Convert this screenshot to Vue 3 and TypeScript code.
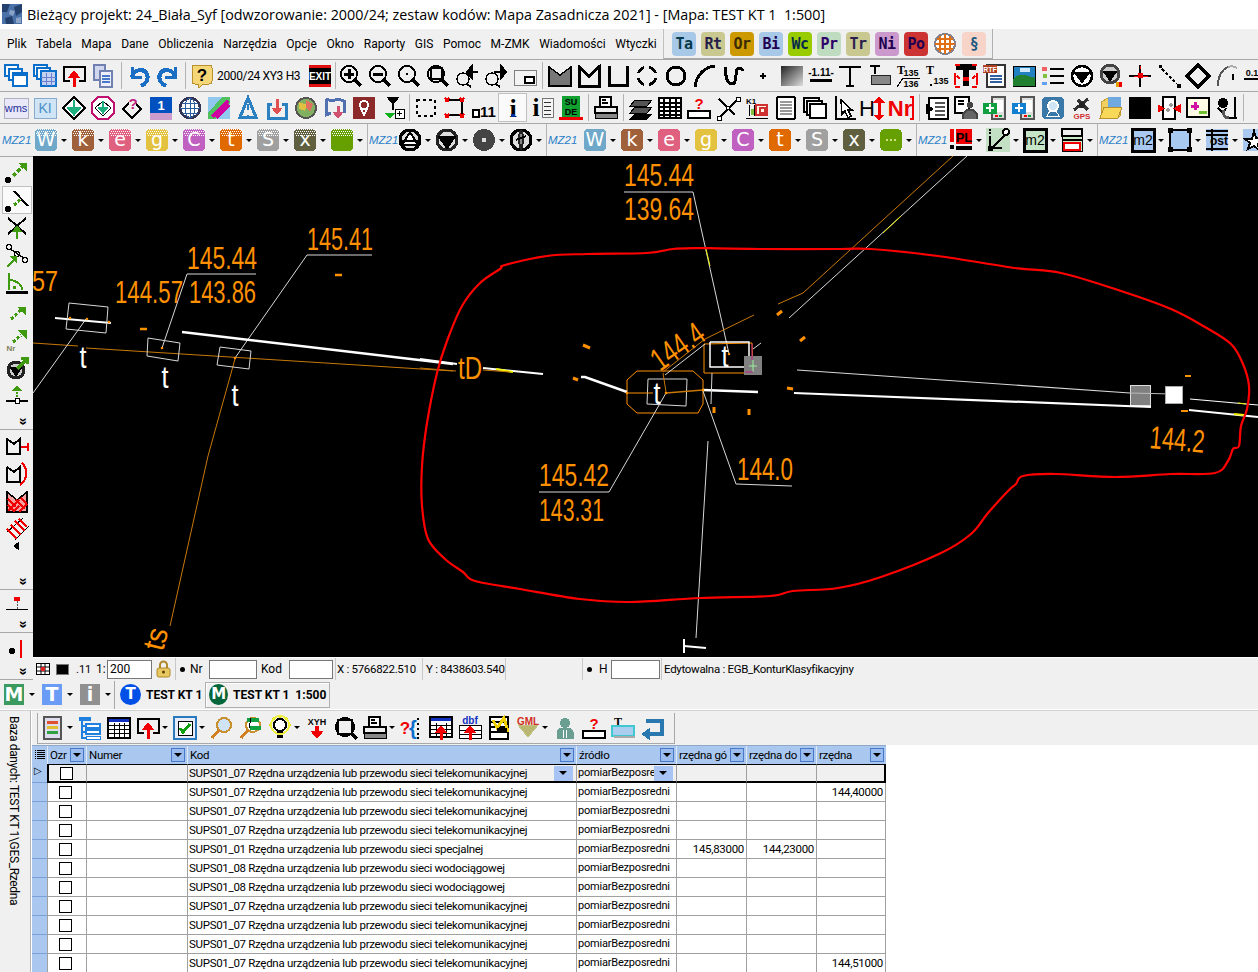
<script setup lang="ts">
type Pt = [number, number]

const P = (d: string, s = '#000', w = 2, f = 'none') =>
  `<path d="${d}" stroke="${s}" stroke-width="${w}" fill="${f}"/>`
const PD = (d: string, s: string, w: number, dash: string) =>
  `<path d="${d}" stroke="${s}" stroke-width="${w}" fill="none" stroke-dasharray="${dash}"/>`
const R = (x: number, y: number, w: number, h: number, f = 'none', s = 'none', sw = 1, r = 0) =>
  `<rect x="${x}" y="${y}" width="${w}" height="${h}" fill="${f}" stroke="${s}" stroke-width="${sw}" rx="${r}"/>`
const C = (x: number, y: number, r: number, f = 'none', s = 'none', sw = 2) =>
  `<circle cx="${x}" cy="${y}" r="${r}" fill="${f}" stroke="${s}" stroke-width="${sw}"/>`
const T = (t: string, x: number, y: number, size: number, f = '#000', weight = 'normal', fam = 'Liberation Sans') =>
  `<text x="${x}" y="${y}" font-size="${size}" fill="${f}" font-weight="${weight}" font-family="${fam}, sans-serif" text-anchor="middle">${t}</text>`

const BL = '#0a6ecb'
const GR = '#3f9a10'
const RD = '#f00000'
const lens = (x = 10, y = 10, r = 8) => C(x, y, r, 'none', '#000', 2) + P(`M${x + 6} ${y + 6}L${x + 12} ${y + 12}`, '#000', 3)
const upRed = (x: number, y0: number, y1: number) => P(`M${x} ${y1}V${y0 + 5}`, RD, 3) + P(`M${x - 5} ${y0 + 6}L${x} ${y0}L${x + 5} ${y0 + 6}Z`, RD, 1, RD)
const dither = [...Array(11).keys()].map((i) => R(2 + i * 2, 1, 1, 1, '#fff') + R(3 + i * 2, 3, 1, 1, '#fff') + R(2 + i * 2, 5, 1, 1, '#fff') + R(3 + i * 2, 7, 1, 1, '#fff')).join('')
const dithered = (col: string, ch: string) =>
  R(1, 1, 22, 22, col, 'none', 1, 4) + dither + T(ch, 12, 18, 19, '#fff', 'normal', 'DejaVu Sans')
const tile = (col: string, ch: string) => R(1, 1, 22, 22, col, 'none', 1, 4) + T(ch, 12, 18, 19, '#fff', 'normal', 'DejaVu Sans')
const triCircle = (inner: string, ring = '#000') => C(12, 12, 10, '#ddd', ring, 3) + inner

const icons: Record<string, string> = {
  winStack: R(1, 1, 13, 11, '#fff', BL, 2) + R(5, 5, 13, 11, '#fff', BL, 2) + R(9, 9, 14, 13, '#fff', BL, 2) + R(9, 9, 14, 3, BL),
  winTable: R(1, 1, 13, 11, '#fff', BL, 2) + R(4, 4, 13, 11, '#fff', BL, 2) + R(8, 7, 15, 15, '#c4d0f0', BL, 2) + P('M8 13h15M8 17h15M13 9v13M18 9v13', '#6a80d0', 1),
  imp: P('M8 17H2V3h21v14h-6', '#000', 2) + upRed(12, 7, 23),
  copy: R(3, 1, 11, 15, '#cfd6ee', '#7080b0', 1.5) + R(9, 7, 12, 16, '#eef', '#7080b0', 1.5) + P('M11 12h8M11 15h8M11 18h8', '#4878c8', 1.5),
  undo: P('M5 3v10h10', '#1a6fc4', 3) + P('M5 13C7 5 17 4 20 10c2 5-1 10-6 12', '#1a6fc4', 4),
  redo: P('M19 3v10H9', '#1a6fc4', 3) + P('M19 13C17 5 7 4 4 10c-2 5 1 10 6 12', '#1a6fc4', 4),
  help: R(2, 1, 20, 19, '#f6d778', '#b89030', 1, 3) + P('M8 20l1 4 4-4', '#b89030', 1, '#f6d778') + T('?', 12, 17, 17, '#000', 'bold'),
  exit: R(1, 1, 22, 22, '#000') + R(1, 1, 22, 3, '#e01010') + R(1, 20, 22, 3, '#e01010') + T('EXIT', 12, 16, 10, '#fff', 'bold'),
  zoomIn: lens() + P('M5 10h10M10 5v10', '#000', 3),
  zoomOut: lens() + P('M5 10h10', '#000', 3),
  zoomDot: lens() + R(9, 9, 2, 2, '#000'),
  zoomBox: C(10, 10, 8, 'none', '#000', 2) + R(5, 4, 11, 11, 'none', '#000', 1.5) + P('M16 16l6 6', '#000', 3),
  zoomPrev: C(8, 15, 6, 'none', '#000', 1.5) + P('M12 20l4 3', '#000', 2) + P('M12 8h11M12 8l5-6v12z', '#000', 2, '#000'),
  zoomNext: C(8, 15, 6, 'none', '#000', 1.5) + P('M12 20l4 3', '#000', 2) + P('M10 8h10M22 8l-5-6v12z', '#000', 2, '#000'),
  winSmall: R(1, 6, 22, 15, '#f4f4f4', '#808080', 1) + R(12, 13, 9, 6, '#fff', '#000', 1.5),
  mGray: P('M1 22V3l11 8 11-8v19z', '#000', 1.5, '#777'),
  mOut: P('M2 22V3l10 9 10-9v19z', '#000', 3),
  uOpen: P('M3 2v19h18V2', '#000', 3),
  circDash: C(12, 12, 9, 'none', '#000', 3) + R(0, 9, 24, 5, '#f0f0f0') + R(9, 0, 5, 24, '#f0f0f0'),
  circ: C(12, 12, 9, 'none', '#000', 3) + R(8, 11, 7, 2, '#f0f0f0'),
  arc: P('M2 23C3 12 11 3 22 2', '#000', 3),
  sCurve: P('M3 3c0 10 3 17 7 17 6 0 2-16 7-16 2 0 3 1 4 3', '#000', 3),
  dot: P('M9 12h6M12 9v6', '#000', 2),
  grad: `<defs><linearGradient id="gd" x1="0" y1="0" x2="1" y2="1"><stop offset="0" stop-color="#222"/><stop offset="1" stop-color="#ddd"/></linearGradient></defs>` + R(1, 2, 22, 20, 'url(#gd)'),
  num111: T('-1.11-', 12, 12, 10, '#000', 'bold') + R(1, 15, 22, 3, '#000'),
  tBig: P('M1 3h22M12 3v20M8 22h8', '#000', 2.5),
  tBox: P('M3 2h10M8 2v8', '#000', 2.5) + R(4, 11, 19, 9, '#888', '#222', 1),
  t135: T('T', 5, 10, 12, '#000', 'bold', 'Liberation Serif') + T('135', 15, 12, 9, '#000', 'bold') + P('M1 23l6-9h17', '#000', 1) + T('136', 15, 23, 9, '#000', 'bold'),
  t135b: T('T', 5, 10, 12, '#000', 'bold', 'Liberation Serif') + T('135', 16, 20, 9, '#000', 'bold') + R(5, 20, 2, 2, '#000'),
  tRed: P('M2 3h20M12 3v19', '#000', 6) + P('M1 9v12M23 9v12M3 12l3 3M21 12l-3 3', RD, 2) + R(9, 13, 6, 4, RD) + P('M1 1h5M18 1h5M1 23h5M18 23h5', RD, 1.5),
  rtf: R(4, 1, 18, 22, '#fff', '#333', 1.5) + R(0, 1, 14, 8, '#b04020') + T('RTF', 7, 8, 7, '#fff', 'bold') + P('M7 12h12M7 15h12M7 18h12', '#3060a0', 1.5),
  picture: R(1, 2, 22, 20, '#2080c0', '#000', 1) + P('M1 16c6-8 10-6 22-2v8H1z', '#000', 0, '#208030') + R(8, 4, 10, 4, '#cfe8ff'),
  list: R(1, 3, 5, 4, '#f06060') + R(2, 10, 4, 4, '#80c040') + R(1, 18, 5, 3, '#60a0f0') + P('M9 5h14M9 12h14M9 19h14', '#000', 2.5),
  tri: C(12, 12, 10, '#fff', '#000', 2.5) + P('M4 8h16L12 19z', '#000', 1, '#000'),
  triRed: C(11, 10, 9, '#ccc', '#444', 3) + P('M4 7h14l-7 10z', '#000', 1, '#000') + R(17, 18, 3, 5, '#e0a000') + R(20, 18, 3, 5, RD),
  crossNode: P('M12 1v22M1 12h22', '#000', 2) + R(10, 9, 5, 5, RD) + P('M12 2v3M6 12h4M15 12h5', RD, 1),
  dotDiag: R(2, 1, 3, 3, '#000') + R(20, 20, 4, 4, '#000') + PD('M5 5l15 15', '#000', 1.5, '3 2'),
  diamond: P('M12 1L23 12 12 23 1 12z', '#000', 4),
  arcDash: P('M3 22c0-8 3-16 10-19', '#555', 2) + P('M13 3c3-1 6-1 9 1', '#aaa', 2) + P('M18 10v6', '#000', 2),
  num01: T('0.1', 8, 12, 9, '#000', 'bold') + R(0, 14, 24, 2, '#000'),
  wms: R(0, 2, 24, 20, '#e8e8f8', '#b0b0c0', 1) + T('wms', 12, 16, 11, '#1f2f9f'),
  ki: R(1, 2, 22, 20, '#cfe4f4', '#88aacc', 1) + T('KI', 12, 17, 14, '#4a90c8'),
  diaGreen: P('M12 1L23 12 12 23 1 12z', '#000', 1.5, '#fff') + P('M12 4v8M6 12l6 7 6-7z', '#20b080', 1.5, '#20b080'),
  octGreen: P('M7 1h10l6 6v10l-6 6H7l-6-6V7z', '#c01070', 1.5, '#fff') + P('M12 5L20 12 12 20 4 12z', '#000', 1) + P('M12 5v7M8 12l4 5 4-5z', '#20b080', 1.5, '#20b080'),
  diaQ: P('M12 4L21 13 12 22 3 13z', '#000', 1.5, 'none') + R(9, 0, 7, 12, '#f0f0f0') + T('?', 13, 13, 15, '#c02080', 'bold'),
  oneBlue: R(1, 1, 22, 16, '#0050c0') + R(1, 17, 22, 7, '#cc9ccc') + T('1', 12, 14, 13, '#fff', 'bold'),
  globe: C(12, 12, 10, '#fff', '#335', 2.5) + P('M2 12h20M12 2v20M4 7h16M4 17h16', '#2a60a0', 1) + `<ellipse cx="12" cy="12" rx="5" ry="10" fill="none" stroke="#2a60a0"/>`,
  pattern: R(1, 1, 22, 22, '#90c8f0') + P('M1 17L15 1h8v6L9 23H1z', '#000', 0, '#50c060') + P('M5 21L21 5M9 22l13-13', '#d000a0', 3, 'none'),
  blueTri: P('M12 2l8 19H4z', '#2a80c0', 3) + P('M12 8v6', '#2a80c0', 2) + C(12, 20, 1, '#2a80c0'),
  trayRed: P('M7 8H3v14h18V8h-4', '#2a80c0', 3) + P('M12 3v11', '#e05050', 3) + P('M7 12l5 6 5-6z', '#e05050', 1, '#e05050'),
  mapGlobe: C(12, 12, 10, '#80b060', '#555', 2) + P('M5 6l8 3-2 6-6-2z', '#e0c040', 0, '#e0c040') + P('M12 4l7 4-3 8-4-4z', '#e07060', 0, '#e07060'),
  mapDown: P('M3 3l6 2 6-2 6 2v12M3 3v16l5-2', '#5070b0', 3) + P('M15 10v8', '#d05070', 3) + P('M10 16l5 6 5-6z', '#d05070', 1, '#d05070'),
  pin: R(1, 1, 22, 22, '#8c2a2a') + C(12, 9, 4, 'none', '#fff', 2) + P('M9 13l3 6 3-6', '#fff', 1.5),
  funnel: P('M6 1h12l-6 7z', '#000', 1, '#000') + R(11, 8, 2, 6, '#000') + P('M4 17h10l-5 5z', '#10b020', 1, '#10b020') + R(14, 13, 9, 9, '#fff', '#000', 1) + P('M16 17h5M18 15v5', '#000', 1),
  dashRect: PD('M3 4H21V20H3Z', '#000', 1.5, '3 3'),
  redCorners: P('M4 4h15v15H4', '#000', 2.5) + P('M2 2l4 4M6 2L2 6M17 2l4 4M21 2l-4 4M2 18l4 4M6 18l-4 4M17 18l4 4M21 18l-4 4', RD, 1.5),
  dot11: R(1, 14, 6, 7, '#fff', '#000', 1.5) + T('11', 16, 21, 15, '#000', 'bold'),
  info: T('i', 12, 21, 26, '#000', 'bold', 'Liberation Serif') + R(10, 18, 4, 3, '#0030a0'),
  infoList: T('i', 6, 20, 25, '#000', 'bold', 'Liberation Serif') + R(12, 2, 11, 19, '#f4f4f4', '#777', 1) + P('M14 6h7M14 10h7M14 14h7M14 18h7', '#333', 1),
  suDe: R(3, 0, 18, 21, '#10a030') + T('SU', 12, 9, 9, '#000', 'bold') + T('DE', 12, 19, 9, '#000', 'bold') + R(0, 21, 24, 3, RD),
  printer: R(6, 1, 11, 10, '#fff', '#000', 1.5) + P('M8 4h4M8 7h6', '#000', 1.5) + R(1, 11, 22, 6, '#eee', '#000', 1.5) + R(1, 17, 22, 5, '#888', '#000', 1),
  layers: P('M6 4h17l-5 6H1zM6 11h17l-5 6H1z', '#000', 1, '#555') + P('M6 18h17l-5 5H1z', '#000', 1, '#000'),
  tableBl: R(1, 2, 22, 20, '#fff', '#000', 2) + P('M1 7h22M1 11h22M1 15h22M1 19h22M6 2v20M12 2v20M18 2v20', '#000', 1.5),
  qBox: R(1, 15, 22, 7, '#fff', '#000', 2) + T('?', 12, 13, 15, RD, 'bold'),
  xNodes: P('M3 22L22 3M3 3l16 16', '#000', 2) + R(1, 20, 4, 4, '#fff', '#000', 1) + R(20, 1, 4, 4, '#fff', '#000', 1) + R(10, 10, 3, 3, '#fff', '#000', 1),
  ktDoc: T('K1', 6, 8, 8, '#000', 'bold') + P('M4 9v11M9 9v11M1 22h22', '#000', 1) + R(11, 9, 11, 10, '#fff4e0', '#d03030', 1.5) + R(15, 12, 5, 5, 'none', '#d03030', 1.5) + R(6, 13, 3, 6, '#80c040'),
  page: R(3, 1, 18, 22, '#fff', '#000', 2, 2) + P('M6 6h12M6 9h12M6 12h12M6 15h12M6 18h12', '#999', 1.5),
  stackW: R(1, 2, 15, 14, '#fff', '#000', 1.5) + R(4, 5, 15, 14, '#fff', '#000', 1.5) + R(7, 8, 16, 14, '#fff', '#000', 2),
  cursorBox: P('M4 0v23h20', '#000', 1.5) + P('M9 4l11 10h-4l3 6-3 2-3-7-3 3z', '#000', 1.5, '#fff'),
  hArrow: T('H', 6, 20, 22, '#000', 'normal') + P('M18 5v15', RD, 3) + P('M13 6l5-5 5 5zM13 19l5 5 5-5z', RD, 1, RD),
  nrRed: T('Nr', 10, 20, 22, RD, 'bold') + P('M20 1h3v22h-3', RD, 1.5),
  clipboard: R(4, 2, 19, 21, '#fff', '#000', 2) + P('M1 8l7 5-7 5z', '#000', 1, '#000') + P('M10 7h10M10 11h10M10 15h10M10 19h10', '#555', 1.5),
  docPerson: R(1, 1, 14, 16, '#fff', '#000', 1.5) + P('M4 5h6M4 8h6', '#000', 1.5) + P('M9 23v-5l4-4h6l4 4v5', '#444', 2, '#666') + C(16, 9, 3, '#444'),
  devGreen: R(9, 1, 13, 22, '#ddd', '#555', 1.5) + R(11, 4, 9, 12, '#fff') + R(0, 7, 14, 11, '#10a040') + P('M3 12h8M7 8v8', '#fff', 2) + R(12, 19, 3, 2, RD) + R(16, 19, 3, 2, '#10a040'),
  devBlue: R(9, 1, 13, 22, '#ddd', '#555', 1.5) + R(11, 4, 9, 12, '#fff') + R(0, 7, 14, 11, '#1080d0') + P('M3 12h8M7 8v8', '#fff', 2) + R(12, 19, 3, 2, RD) + R(16, 19, 3, 2, '#10a040'),
  badge: R(1, 1, 22, 22, '#3a78a8', 'none', 1, 4) + C(12, 10, 5, '#cfe4f4', '#fff', 2) + P('M6 20l3-5h6l3 5z', '#fff', 1),
  gps: P('M4 14L18 3M8 4l10 10', '#333', 3) + C(12, 9, 3, '#222') + T('GPS', 12, 23, 8, '#d03030', 'bold'),
  folder: P('M2 22V6l7-4h12v18z', '#c8a030', 1, '#f0d060') + R(9, 1, 13, 10, '#70a8e0') + P('M1 22l4-11h18l-4 11z', '#b89030', 1, '#f8d858'),
  black: R(1, 1, 22, 22, '#000'),
  boxArrows: R(6, 1, 12, 22, '#fff', '#000', 1.5) + P('M12 9h4M14 7v4M9 14h4M11 12v4', '#999', 1.5) + P('M1 9v7l6-3.5zM23 9v7l-6-3.5z', RD, 1, RD),
  plusMinus: R(1, 2, 22, 19, '#fffbe4', '#000', 1.5) + P('M5 10h8M9 6v8', '#d010a0', 3) + P('M13 16h8', '#70c030', 3),
  figure: C(8, 7, 5, '#000') + P('M3 12l5 5 3-5', '#000', 2) + P('M20 1v20M13 22h9', '#000', 2) + P('M8 14c0 6 3 8 6 8', '#555', 3),
  mzTri: triCircle(P('M12 4l8 13H4z', '#000', 2, '#fff') + P('M4 13h16', '#000', 2)),
  mzTriDown: triCircle(P('M3 8h18l-9 13z', '#000', 1, '#000'), '#222'),
  mzSquare: C(12, 12, 11, '#444') + R(10, 10, 4, 4, '#ddd'),
  mzAxe: triCircle(P('M12 2c3 6 3 10 0 20M12 2c-3 6-3 10 0 20', '#222', 2, '#888') + P('M7 12l10-4', '#000', 2)),
  pl: R(1, 1, 4, 13, RD) + R(1, 17, 4, 4, '#000') + R(7, 1, 16, 15, RD) + T('PL', 15, 14, 13, '#000', 'bold') + R(7, 18, 16, 4, '#000'),
  nodeGraph: R(0, 0, 24, 24, '#c4e0c4') + P('M4 8v12h12M20 6L6 20', '#000', 2) + C(20, 4, 3, '#fff', '#000', 2) + R(2, 18, 5, 5, '#000') + P('M3 5h2M3 2h2', '#000', 2),
  m2Box: R(1, 1, 22, 22, '#c6e4c6', '#000', 3) + T('m2', 12, 17, 14, '#000'),
  formRed: R(2, 1, 20, 22, '#c8ecc8', '#000', 1) + R(2, 1, 20, 7, '#f0f0f0', '#000', 2) + R(2, 11, 20, 2, '#000') + R(4, 15, 16, 7, '#fff', RD, 2),
  m2Blue: R(1, 1, 22, 22, '#a8c8f0', '#000', 3) + T('m2', 12, 17, 14, '#000'),
  squareNodes: R(2, 2, 20, 20, '#a8c8f0', '#000', 2) + R(0, 0, 5, 5, '#000') + R(19, 0, 5, 5, '#000') + R(0, 19, 5, 5, '#000') + R(19, 19, 5, 5, '#000'),
  ost: R(1, 1, 22, 22, '#a8c8f0') + P('M1 3h22M1 21h22M1 7h22', '#000', 1.5) + R(6, 1, 2, 22, '#000') + T('ost', 14, 17, 12, '#000', 'bold'),
  star: R(1, 1, 22, 22, '#a8c8f0') + P('M12 3l2 7 7 2-5 4 1 6-5-4-6 3 2-6-5-4h7z', '#000', 2, '#fff'),
  listColor: R(3, 1, 17, 22, '#dde', '#555', 1.5) + R(6, 5, 11, 3, '#e05030') + R(6, 10, 11, 3, '#e0c030') + R(6, 15, 11, 3, '#30a040'),
  tree: R(1, 1, 12, 4, '#2080e0') + R(8, 8, 14, 4, '#fff', '#2080e0', 1.5) + R(8, 14, 14, 4, '#fff', '#2080e0', 1.5) + R(8, 20, 14, 3, '#fff', '#2080e0', 1) + P('M4 5v17h4M4 10h4M4 16h4', '#2080e0', 1.5),
  tableWin: R(1, 2, 22, 20, '#fff', '#000', 1.5) + R(2, 3, 20, 3, '#1030c0') + P('M2 9h20M2 13h20M2 17h20M7 7v14M12 7v14M17 7v14', '#000', 1),
  check: R(1, 1, 22, 22, '#e8ecf8', '#2a7ac0', 2.5) + R(5, 5, 14, 14, '#fff', '#000', 1) + P('M7 12l3 4 7-8', '#10a010', 3),
  search: C(14, 9, 7, '#cfe4f8', '#c89030', 2) + P('M9 14L2 22', '#d08020', 3),
  searchGreen: C(14, 9, 7, '#fff', '#c89030', 2) + P('M9 14L2 22', '#d08020', 3) + P('M8 4h12M11 12h11', '#10a040', 4) + P('M12 2l-2 10', '#000', 1),
  bulb: C(12, 9, 6, '#fff', '#000', 2) + P('M12 0v2M3 9H1M23 9h-2M5 2l2 2M19 2l-2 2', '#e0e000', 2) + R(9, 15, 6, 7, '#000') + C(12, 9, 9, 'none', '#f0f040', 2),
  xyh: T('XYH', 12, 9, 9, '#000', 'bold') + R(10, 10, 4, 7, RD) + P('M6 15l6 7 6-7z', RD, 1, RD),
  lensRect: C(11, 11, 9, 'none', '#000', 2) + R(4, 4, 14, 14, 'none', '#000', 1.5) + P('M17 17l6 6', '#000', 3),
  braces: T('?', 5, 18, 17, RD, 'bold') + T('{', 13, 19, 20, BL, 'bold') + P('M18 2v2M18 7v2M18 12v2M18 17v2M18 21v2', '#000', 2),
  tableUp: R(1, 1, 22, 20, '#fff', '#000', 1.5) + R(2, 2, 20, 3, '#1030c0') + P('M2 9h20M2 13h20M2 17h20M7 7v14M17 7v14', '#000', 1) + upRed(12, 10, 24),
  dbfUp: T('dbf', 12, 8, 10, '#1030c0', 'bold') + R(1, 9, 22, 13, '#fff', '#000', 1) + P('M1 14h22M1 18h22', '#000', 1) + upRed(12, 10, 24),
  docCheck: R(3, 1, 18, 22, '#fff', '#000', 2) + P('M3 6h18M3 11h18M3 16h18', '#000', 1.5) + P('M6 4l4 8 7-10 4 14', '#f0d000', 3) + R(10, 12, 10, 5, '#000'),
  gml: P('M2 9h20L12 21z', '#c0c080', 1, '#b8b870') + T('GML', 12, 9, 10, '#d03020', 'bold'),
  person: C(12, 7, 5, '#6a9e90') + P('M4 22v-6c0-3 4-4 8-4s8 1 8 4v6z', '#6a9e90', 1, '#6a9e90') + R(10, 14, 1, 8, '#fff') + R(13, 14, 1, 8, '#fff'),
  tLight: T('T', 7, 10, 12, '#000', 'bold', 'Liberation Serif') + R(1, 10, 22, 10, '#aacdf0', '#40c8d0', 1.5) + R(3, 20, 21, 2, '#aaa'),
  ret: P('M8 18h14V5H6', '#2a78b0', 4) + P('M9 13l-7 5 7 5z', '#2a78b0', 1, '#2a78b0'),
  dots: R(1, 1, 22, 22, '#66a000', 'none', 1, 5) + P('M7 12h2M11 12h2M15 12h2', '#cde080', 2),
  dDots: R(1, 1, 22, 22, '#66a000', 'none', 1, 4) + dither,
  // left bar
  lDots: C(3, 20, 3, '#000') + PD('M8 16L17 7', GR, 3, '4 2') + P('M14 3h7v7z', GR, 1, GR),
  lPressed: C(3, 21, 3, '#000') + PD('M9 17l7-6', GR, 3, '3 2') + P('M9 3l14 15', '#000', 2),
  lCross: P('M3 2l18 16M21 2L3 18', '#000', 2) + P('M12 23v-9', GR, 2) + P('M8 15l4-5 4 5z', GR, 1, GR),
  lNodes: C(4, 3, 2.5, 'none', '#000', 1.5) + C(20, 16, 2.5, 'none', '#000', 1.5) + C(12, 10, 2.5, 'none', '#000', 1.5) + P('M5 5l14 9', '#000', 1.5) + P('M2 23l8-8', GR, 2) + P('M5 12h6v6z', GR, 1, GR),
  lAngle: R(1, 19, 22, 3, '#000') + P('M4 18V1M4 8c7 0 13 4 13 10', GR, 2) + R(8, 14, 3, 3, GR),
  lSmall: PD('M6 19L16 10', GR, 3, '3 2') + P('M13 7h7v7z', GR, 1, GR),
  lNr: PD('M8 14L16 7', GR, 3, '3 2') + P('M13 2h8v8z', GR, 1, GR) + T('Nr', 6, 23, 8, '#808060', 'bold'),
  lTri: C(11, 14, 8, '#ccc', '#222', 3) + P('M5 11h12l-6 9z', '#000', 1, '#000') + P('M12 13L22 3M16 2h6v6', GR, 3),
  lBase: R(1, 16, 22, 2, '#000') + R(10, 14, 4, 5, '#fff', '#000', 1) + PD('M12 13V5', GR, 1.5, '2 1') + P('M8 6l4-4 4 4z', GR, 1, GR),
  rTee: P('M2 5v16h13V6l-6 5-7-5', '#000', 2) + P('M16 14h7M23 10v8', RD, 2),
  rArc: P('M2 6v15h13V6l-6 5-7-5', '#000', 2) + P('M17 2c6 6 6 16-2 22', RD, 2),
  rHatch: P('M2 3l10 8 10-8v20H2z', '#000', 1.5, '#f4a0a0') + P('M3 10l8 8M3 16l6 6M11 11l9 9M16 9l6 6M8 23l6-6M14 23l8-8M3 22L14 11', RD, 1.5),
  rLadder: P('M2 15L18 1M10 23L24 9', '#000', 1) + P('M6 8l10 10M10 4l10 10M14 2l8 8M2 12l10 10', RD, 2) + P('M13 26v6l-4-3z', '#000', 1, '#000'),
  tRule: R(1, 16, 22, 1, '#000') + PD('M12 16V8', '#555', 1, '2 1') + R(9, 4, 6, 4, RD),
  tDotLine: C(7, 15, 3, '#000') + P('M16 4v18', RD, 2),
}

interface Row3 { w: number; tiles: string[] }
const row1: (string | number | { text: string })[] = [
  'winStack', 'winTable', 'imp', 'copy', 7, 'undo', 'redo', 5, 'help', { text: '2000/24 XY3 H3' }, 'exit', 2,
  'zoomIn', 'zoomOut', 'zoomDot', 'zoomBox', 'zoomPrev', 'zoomNext', 'winSmall', 6, 'mGray', 'mOut', 'uOpen',
  'circDash', 'circ', 'arc', 'sCurve', 'dot', 'grad', 'num111', 'tBig', 'tBox', 't135', 't135b', 'tRed', 'rtf', 'picture',
  'list', 'tri', 'triRed', 'crossNode', 'dotDiag', 'diamond', 'arcDash', 'num01',
]
const row2: (string | number)[] = [
  'wms', 'ki', 'diaGreen', 'octGreen', 'diaQ', 'oneBlue', 'globe', 'pattern', 'blueTri', 'trayRed', 'mapGlobe', 'mapDown', 'pin', 'funnel', 4,
  'dashRect', 'redCorners', 'dot11', '*info', 'infoList', 'suDe', 6, 'printer', 6, 'layers', 'tableBl', 'qBox', 'xNodes', 'ktDoc', 'page', 'stackW', 'cursorBox',
  'hArrow', 'nrRed', 6, 'clipboard', 'docPerson', 'devGreen', 'devBlue', 'badge', 'gps', 'folder', 'black', 'boxArrows', 'plusMinus', 'figure', 3,
]
const row3: Row3[] = [
  { w: 34, tiles: ['dw', 'dk', 'de', 'dg', 'dc', 'dt', 'ds', 'dx', 'dDots'] },
  { w: 31, tiles: ['mzTri', 'mzTriDown', 'mzSquare', 'mzAxe'] },
  { w: 37, tiles: ['tw', 'tk', 'te', 'tg', 'tc', 'tt', 'ts', 'tx', 'dots'] },
  { w: 33, tiles: ['pl', 'nodeGraph', 'm2Box', 'formRed'] },
  { w: 34, tiles: ['m2Blue', 'squareNodes', 'ost', 'star'] },
]
const letters: [string, string, string][] = [
  ['w', 'W', '#6fa8c8'], ['k', 'k', '#a0603a'], ['e', 'e', '#e0607f'], ['g', 'g', '#e2c23f'], ['c', 'C', '#c060c0'],
  ['t', 't', '#e06a00'], ['s', 'S', '#a0a0a0'], ['x', 'x', '#606040'],
]
letters.forEach(([k, ch, col]) => {
  icons['d' + k] = dithered(col, ch)
  icons['t' + k] = tile(col, ch)
})

const colorTabs = [
  ['Ta', '#a8c8e8', '#063a4a'], ['Rt', '#c8c890', '#26204a'], ['Or', '#cc9900', '#3a2c00'], ['Bi', '#a8c8e8', '#200050'],
  ['Wc', '#99cc00', '#062a4a'], ['Pr', '#c0dcc0', '#30006a'], ['Tr', '#c8c890', '#2a2050'], ['Ni', '#cc99cc', '#200050'], ['Po', '#cc3333', '#200050'],
]
const menu = ['Plik', 'Tabela', 'Mapa', 'Dane', 'Obliczenia', 'Narzędzia', 'Opcje', 'Okno', 'Raporty', 'GIS', 'Pomoc', 'M-ZMK', 'Wiadomości', 'Wtyczki']

const leftGroups = [
  { h: 273, items: ['lDots', '*lPressed', 'lCross', 'lNodes', 'lAngle', 'lSmall', 'lNr', 'lTri', 'lBase'] },
  { h: 160, items: ['rTee', 'rArc', 'rHatch', 'rLadder'] },
  { h: 43, items: ['tRule'] },
  { h: 47, items: ['tDotLine'] },
]
const lowerTools: [string, boolean][] = [
  ['listColor', true], ['tree', false], ['tableWin', false], ['imp', true], ['check', true], ['search', false], ['searchGreen', false],
  ['bulb', true], ['xyh', false], ['lensRect', false], ['printer', true], ['braces', false], ['tableUp', false], ['dbfUp', false],
  ['docCheck', false], ['gml', true], ['person', false], ['qBox', false], ['tLight', false], ['ret', false],
]

const TELE = 'SUPS01_07 Rzędna urządzenia lub przewodu sieci telekomunikacyjnej'
const WOD = 'SUPS01_08 Rzędna urządzenia lub przewodu sieci wodociągowej'
const SPEC = 'SUPS01_01 Rzędna urządzenia lub przewodu sieci specjalnej'
const rows = [
  { kod: TELE }, { kod: TELE, c: '144,40000' }, { kod: TELE }, { kod: TELE },
  { kod: SPEC, a: '145,83000', b: '144,23000' }, { kod: WOD }, { kod: WOD },
  { kod: TELE }, { kod: TELE }, { kod: TELE }, { kod: TELE, c: '144,51000' },
]
const headers = ['Numer', 'Kod', 'źródło', 'rzędna gó', 'rzędna do', 'rzędna']

// map geometry, in page coordinates
const OR = '#ff9000'
const ORD = '#c87808'
const WH = '#fff'
const GY = '#d8d8d8'
const YL = '#f0f000'
const mapLines: [string, string, number][] = [
  ['33,344 78,347', ORD, 1], ['86,349 453,372', ORD, 1], ['235,360 208,457 170,627', ORD, 1],
  ['33,394 86,320', GY, 1], ['55,319 111,324', WH, 2], ['69,304 108,308 106,334 66,330 69,304', GY, 1],
  ['148,339 180,344 178,362 147,357 148,339', GY, 1], ['162,349 187,275 256,275', GY, 1],
  ['220,348 251,352 249,370 217,366 220,348', GY, 1], ['235,359 307,256 372,256', GY, 1],
  ['182,333 453,365', WH, 2.5], ['420,360 457,365', WH, 2], ['483,369 543,375', WH, 2], ['496,370 513,373', YL, 2],
  ['420,369 456,372', ORD, 1], ['483,371 510,373', ORD, 1],
  ['624,193 693,193 729,355', GY, 1], ['706,250 710,267', YL, 1],
  ['704,345 752,344 753,374 704,374 704,345', OR, 1],
  ['710,343 749,343 749,368 710,368 710,343', WH, 1.5],
  ['637,372 693,372 703,381 703,405 698,414 637,414 627,405 627,381 637,372', OR, 1],
  ['648,380 687,380 686,407 647,405 648,380', GY, 1],
  ['627,394 653,394', OR, 1], ['666,394 703,391', ORD, 1.5],
  ['581,378 585,378 627,393', WH, 2.5], ['703,391 758,393', WH, 2.5],
  ['666,394 609,493 539,493', GY, 1], ['703,392 736,485 792,487', GY, 1],
  ['708,442 696,639', GY, 1], ['684,640 684,654', WH, 2], ['684,647 706,649', WH, 2], ['712,374 711,405', GY, 1],
  ['663,373 705,340 754,316', ORD, 1], ['778,305 803,294 953,157', ORD, 1], ['663,374 666,393', ORD, 1],
  ['665,376 705,345', GY, 1], ['753,350 761,344', GY, 1], ['789,319 967,157', GY, 1], ['883,234 901,217', YL, 1],
  ['797,371 1130,394', GY, 1.2], ['794,394 1151,408', WH, 2.2], ['1130,394 1173,395', '#bbb', 1],
  ['1190,400 1258,406', WH, 1.2], ['1238,404 1246,405', YL, 1.2], ['1189,411 1258,418', WH, 2], ['1234,415 1244,416', YL, 2],
  ['583,346 590,349', OR, 3], ['573,379 578,381', OR, 3], ['777,316 782,312', OR, 3], ['800,342 805,338', OR, 3],
  ['787,389 793,390', OR, 3], ['714,408 714,414', OR, 3], ['749,410 749,416', OR, 3], ['1185,377 1191,377', OR, 2],
  ['1181,412 1188,412', OR, 2], ['140,330 147,330', OR, 2.5], ['335,276 342,276', OR, 2.5],
]
const mapTexts = [
  { s: '57', x: 32, y: 292, len: 26, size: 30 },
  { s: '145.44', x: 187, y: 270, len: 70, size: 32 },
  { s: '144.57', x: 115, y: 304, len: 68, size: 32 },
  { s: '143.86', x: 189, y: 304, len: 67, size: 32 },
  { s: '145.41', x: 307, y: 251, len: 66, size: 32 },
  { s: '145.44', x: 624, y: 187, len: 70, size: 32 },
  { s: '139.64', x: 624, y: 221, len: 70, size: 32 },
  { s: 'tD', x: 458, y: 380, len: 24, size: 32 },
  { s: '145.42', x: 539, y: 487, len: 70, size: 32 },
  { s: '143.31', x: 539, y: 522, len: 65, size: 32 },
  { s: '144.0', x: 737, y: 481, len: 56, size: 32 },
  { s: '144.2', x: 1149, y: 449, len: 55, size: 32, rot: 5 },
  { s: '144.4', x: 660, y: 373, len: 58, size: 32, rot: -35 },
  { s: 'ts', x: 163, y: 653, len: 22, size: 31, rot: -76 },
]
const tLabels: Pt[] = [[83, 369], [165, 389], [235, 407], [657, 405], [725, 368]]
const orangeDots: Pt[] = [[70, 319], [87, 320], [109, 323], [162, 349], [235, 359], [729, 355], [666, 394], [703, 391], [627, 394]]
const redPts: Pt[] = [
  [697, 249], [760, 250], [840, 250], [871, 250], [938, 257], [1015, 269], [1061, 274], [1121, 292], [1171, 310], [1205, 328], [1231, 345],
  [1243, 365], [1249, 387], [1247, 410], [1241, 427], [1239, 447], [1233, 450], [1228, 462], [1215, 474], [1171, 475], [1115, 478], [1055, 475],
  [1023, 477], [1016, 485], [1008, 492], [988, 514], [971, 535], [941, 554], [881, 578], [838, 589], [793, 592], [770, 597], [700, 599], [630, 603],
  [580, 600], [520, 590], [475, 582], [463, 573], [445, 560], [428, 540], [422, 507], [422, 467], [427, 424], [437, 374], [447, 342], [462, 307],
  [480, 284], [500, 270], [505, 266], [547, 257], [587, 255], [647, 254], [673, 250], [697, 249],
]
// catmull-rom through the outline points
const redPath = redPts.reduce((d, p, i, a) => {
  if (i === 0) return `M${p[0]} ${p[1]}`
  const p0 = a[i - 2] ?? a[i - 1]
  const p1 = a[i - 1]
  const p3 = a[i + 1] ?? p
  const c1 = [p1[0] + (p[0] - p0[0]) / 6, p1[1] + (p[1] - p0[1]) / 6]
  const c2 = [p[0] - (p3[0] - p1[0]) / 6, p[1] - (p3[1] - p1[1]) / 6]
  return `${d}C${c1[0]} ${c1[1]} ${c2[0]} ${c2[1]} ${p[0]} ${p[1]}`
}, '')
</script>

<template>
  <div class="app">
    <div class="title">
      <svg class="logo" viewBox="0 0 20 20"><rect width="20" height="20" fill="#4a72a8" /><path d="M0 0h8l-3 8H0zM12 3l8-3v8l-6 4zM3 14l7-2 2 8H4z" fill="#24406c" /><path d="M8 6l5 1-2 5-4-2zM14 14l5-1v6h-5z" fill="#8aa4c8" /></svg>
      <span class="title-text">Bieżący projekt: 24_Biała_Syf [odwzorowanie: 2000/24; zestaw kodów: Mapa Zasadnicza 2021] - [Mapa: TEST KT 1&nbsp;&nbsp;1:500]</span>
    </div>

    <div class="menubar">
      <div class="menu">
        <span v-for="m in menu" :key="m">{{ m }}</span>
      </div>
      <div class="color-tabs">
        <span v-for="c in colorTabs" :key="c[0]" class="color-tab" :style="{ background: c[1], color: c[2] }">{{ c[0] }}</span>
        <span class="slot"><svg class="ic" viewBox="0 0 24 24"><circle cx="12" cy="12" r="10" fill="#fff" stroke="#808090" stroke-width="2" /><path d="M2 12h20M4 7h16M4 17h16M12 2v20M7 4v16M17 4v16" stroke="#e07018" stroke-width="1.5" /></svg></span>
        <span class="color-tab para">§</span>
      </div>
    </div>

    <div class="bar row1">
      <template v-for="(it, i) in row1" :key="i">
        <i v-if="typeof it === 'number'" class="sep" :style="{ width: it + 'px' }"></i>
        <span v-else-if="typeof it === 'object'" class="crs">{{ it.text }}</span>
        <span v-else class="slot"><svg class="ic" viewBox="0 0 24 24" v-html="icons[it]"></svg></span>
      </template>
    </div>
    <div class="bar row2">
      <template v-for="(it, i) in row2" :key="i">
        <i v-if="typeof it === 'number'" class="sep" :style="{ width: it + 'px' }"></i>
        <span v-else class="slot" :class="{ pressed: it.startsWith('*') }"><svg class="ic" viewBox="0 0 24 24" v-html="icons[it.replace('*', '')]"></svg></span>
      </template>
    </div>
    <div class="bar row3">
      <div v-for="(g, i) in row3" :key="i" class="mz-group">
        <span class="mz" :style="{ width: g.w + 'px' }">MZ21</span>
        <span v-for="t in g.tiles" :key="t" class="mz-slot"><svg class="ic tile" viewBox="0 0 24 24" v-html="icons[t]"></svg><b class="caret"></b></span>
      </div>
    </div>

    <div class="workspace">
      <aside class="leftbar">
        <div v-for="(g, i) in leftGroups" :key="i" class="left-group" :style="{ height: g.h + 'px' }">
          <span v-for="it in g.items" :key="it" class="left-btn" :class="{ pressed: it.startsWith('*') }"><svg class="ic" viewBox="0 0 24 24" v-html="icons[it.replace('*', '')]"></svg></span>
          <span class="chev">»</span>
        </div>
      </aside>
      <div class="main">
        <svg class="map" viewBox="33 157 1225 501">
          <rect x="33" y="157" width="1225" height="501" fill="#000" />
          <rect x="1130.5" y="386.5" width="20" height="20" fill="#808080" stroke="#ddd" />
          <polyline v-for="(l, i) in mapLines" :key="i" :points="l[0]" :stroke="l[1]" :stroke-width="l[2]" fill="none" />
          <rect x="744" y="357" width="18" height="19" fill="#808080" />
          <path d="M753 361v12M749 367h8" stroke="#9cf09c" stroke-width="1" />
          <path d="M752 345v16M745 373h8" stroke="#c02080" stroke-width="1" />
          <rect x="1165.5" y="387.5" width="17" height="17" fill="#fff" stroke="#aaa" />
          <circle v-for="(d, i) in orangeDots" :key="i" :cx="d[0]" :cy="d[1]" r="1.3" fill="#ff9000" />
          <path :d="redPath" fill="none" stroke="#f00" stroke-width="2.2" />
          <text
            v-for="(t, i) in mapTexts"
            :key="i"
            class="map-num"
            :x="t.x"
            :y="t.y"
            :font-size="t.size"
            :textLength="t.len"
            lengthAdjust="spacingAndGlyphs"
            :transform="t.rot ? `rotate(${t.rot} ${t.x} ${t.y})` : undefined"
          >{{ t.s }}</text>
          <text v-for="(p, i) in tLabels" :key="i" class="map-t" :x="p[0] - 3.5" :y="p[1]" font-size="31" textLength="7" lengthAdjust="spacingAndGlyphs">t</text>
        </svg>
        <div class="status">
          <svg class="stat-ic" viewBox="0 0 14 12"><rect x=".5" y=".5" width="13" height="11" fill="#fff" stroke="#000" /><path d="M0 4h14M0 8h14M5 0v12M9 0v12" stroke="#000" /><rect x="5" y="4" width="4" height="4" fill="#e02020" /></svg>
          <b class="stat-sq"></b>
          <span class="stat-11">.11</span>
          <span class="stat-one">1:</span>
          <span class="input i-scale">200</span>
          <svg class="lock" viewBox="0 0 15 18"><path d="M4 8V5a3.500 3.500 0 0 1 7 0v3" fill="none" stroke="#b08828" stroke-width="2" /><rect x="1" y="8" width="13" height="9" rx="2" fill="#e8c860" stroke="#b08828" /><circle cx="7.500" cy="12" r="1.500" fill="#604000" /></svg>
          <i class="cell-line"></i>
          <b class="radio"></b>
          <span class="lbl w-nr">Nr</span>
          <span class="input i-nr"></span>
          <span class="lbl w-kod">Kod</span>
          <span class="input i-kod"></span>
          <i class="cell-line"></i>
          <span class="coord cx">X : 5766822.510</span>
          <i class="cell-line"></i>
          <span class="coord cy">Y : 8438603.540</span>
          <i class="cell-line"></i>
          <span class="gap-h"></span>
          <i class="cell-line"></i>
          <b class="radio"></b>
          <span class="lbl w-h">H</span>
          <span class="input i-h"></span>
          <i class="cell-line"></i>
          <span class="coord edit">Edytowalna : EGB_KonturKlasyfikacyjny</span>
        </div>
      </div>
    </div>

    <div class="tabs">
      <span class="big-tile green">M</span><b class="caret"></b>
      <span class="big-tile blue">T</span><b class="caret"></b>
      <span class="big-tile gray">i</span><b class="caret"></b>
      <i class="tab-line"></i>
      <span class="map-tab"><span class="round blue2">T</span>TEST KT 1</span>
      <span class="map-tab active"><span class="round dark">M</span>TEST KT 1&nbsp;&nbsp;1:500</span>
    </div>

    <div class="lower">
      <div class="vtab">Baza danych: TEST KT 1\GES_Rzedna</div>
      <div class="data">
        <div class="data-tools">
          <div class="tools-inner">
            <span v-for="(t, i) in lowerTools" :key="i" class="tool" :class="{ 'has-caret': t[1] }">
              <span class="slot"><svg class="ic" viewBox="0 0 24 24" v-html="icons[t[0]]"></svg></span>
              <b v-if="t[1]" class="caret"></b>
            </span>
          </div>
        </div>
        <div class="grid">
          <div class="g-row g-head">
            <div class="h-first">
              <svg viewBox="0 0 10 10" width="10" height="10"><path d="M2 .5h8M2 2.500h8M2 4.500h8M2 6.500h8M2 8.500h8M0 .5h1M0 2.500h1M0 4.500h1M0 6.500h1M0 8.500h1" stroke="#000" stroke-width="1" /></svg>
            </div>
            <div class="h-cell"><span>Ozr</span><b class="h-btn"></b></div>
            <div v-for="h in headers" :key="h" class="h-cell"><span>{{ h }}</span><b class="h-btn"></b></div>
          </div>
          <div v-for="(r, i) in rows" :key="i" class="g-row" :class="{ selected: i === 0 }">
            <div class="ind"><span v-if="i === 0" class="ind-mark">▷</span></div>
            <div class="cell center"><span class="chk"></span></div>
            <div class="cell"></div>
            <div class="cell">{{ r.kod }}<b v-if="i === 0" class="s-btn"></b></div>
            <div class="cell src">{{ i === 0 ? 'pomiarBezposre' : 'pomiarBezposredni' }}<b v-if="i === 0" class="s-btn"></b></div>
            <div class="cell num">{{ r.a }}</div>
            <div class="cell num">{{ r.b }}</div>
            <div class="cell num">{{ r.c }}</div>
          </div>
        </div>
      </div>
    </div>
  </div>
</template>

<style>
html,
body {
  margin: 0;
  background: #fff;
}
</style>

<style scoped>
.app {
  width: 1258px;
  height: 972px;
  overflow: hidden;
  display: flex;
  flex-direction: column;
  background: #fff;
  font-family: 'Liberation Sans', sans-serif;
  color: #000;
}
.ic {
  width: 24px;
  height: 24px;
  display: block;
  overflow: visible;
  shape-rendering: crispEdges;
  flex: none;
}

.title {
  height: 29px;
  flex: none;
  display: flex;
  align-items: center;
  padding-left: 2px;
  gap: 5px;
}
.logo {
  width: 20px;
  height: 20px;
  margin-top: -2px;
}
.title-text {
  font-family: 'Open Sans', sans-serif;
  font-size: 14.35px;
  white-space: pre;
  margin-top: -1px;
}

.menubar {
  height: 31px;
  flex: none;
  background: #f0f0f0;
  display: flex;
  border-bottom: 1px solid #a8a8a8;
  box-sizing: border-box;
}
.menu {
  display: flex;
  gap: 9.6px;
  padding-left: 7px;
  width: 659px;
  box-sizing: border-box;
  align-items: center;
  font-family: Roboto, sans-serif;
  font-size: 12px;
  white-space: nowrap;
  overflow: hidden;
}
.color-tabs {
  display: flex;
  align-items: center;
  padding-left: 8px;
  width: 330px;
  box-sizing: border-box;
  border-left: 1px solid #c0c0c0;
  border-right: 1px solid #b0b0b0;
  border-bottom: 1px solid #a8a8a8;
  margin-left: 4px;
  gap: 5px;
}
.color-tab {
  width: 24px;
  height: 24px;
  border-radius: 4px;
  font-family: 'DejaVu Sans Mono', monospace;
  font-weight: 700;
  font-size: 15px;
  line-height: 24px;
  text-align: center;
  letter-spacing: -0.5px;
}
.color-tabs .slot {
  width: 24px;
}
.para {
  background: #f8d4c8;
  color: #1a5a80;
}

.bar {
  flex: none;
  display: flex;
  align-items: center;
  background: #f0f0f0;
  box-sizing: border-box;
  border-bottom: 1px solid #a8a8a8;
  overflow: hidden;
}
.row1,
.row2 {
  height: 32px;
  padding-left: 1px;
}
.row3 {
  height: 32px;
  align-items: stretch;
  border-bottom: 0;
}
.slot {
  width: 29px;
  height: 29px;
  flex: none;
  display: flex;
  align-items: center;
  justify-content: center;
}
.slot.pressed,
.left-btn.pressed {
  background: #fafafa;
  box-shadow: inset 0 0 0 1px #c0c0c0;
}
.sep {
  flex: none;
  align-self: stretch;
  position: relative;
  display: block;
}
.sep::after {
  content: '';
  position: absolute;
  left: 50%;
  top: 2px;
  bottom: 2px;
  width: 1px;
  background: #b4b4b4;
}
.crs {
  width: 89px;
  flex: none;
  font-family: Roboto, sans-serif;
  font-size: 12px;
  letter-spacing: -0.35px;
  white-space: nowrap;
  padding-left: 1px;
  box-sizing: border-box;
}

.mz-group {
  display: flex;
  align-items: center;
  flex: none;
  border-right: 1px solid #b4b4b4;
  box-sizing: border-box;
}
.mz-group + .mz-group {
  margin-left: -1px;
}
.mz {
  font-size: 11.5px;
  font-style: italic;
  color: #2a80c8;
  padding-left: 2px;
  box-sizing: border-box;
  flex: none;
  white-space: nowrap;
}
.mz-slot {
  width: 37px;
  flex: none;
  display: flex;
  align-items: center;
  box-sizing: border-box;
}
.tile {
  margin-right: 3px;
}
.caret {
  width: 0;
  height: 0;
  flex: none;
  border-left: 3px solid transparent;
  border-right: 3px solid transparent;
  border-top: 3px solid #000;
}

.workspace {
  height: 524px;
  flex: none;
  display: flex;
  background: #f0f0f0;
}
.leftbar {
  width: 33px;
  flex: none;
  box-sizing: border-box;
  border-top: 1px solid #a8a8a8;
}
.left-group {
  display: flex;
  flex-direction: column;
  align-items: center;
  box-sizing: border-box;
  border-bottom: 1px solid #a8a8a8;
  padding-top: 1px;
}
.left-btn {
  width: 30px;
  height: 28px;
  flex: none;
  display: flex;
  align-items: center;
  justify-content: center;
}
.chev {
  margin-top: auto;
  font-size: 14px;
  line-height: 11px;
  font-weight: 700;
  transform: rotate(90deg);
  margin-bottom: 2px;
  align-self: flex-end;
  margin-right: 5px;
}
.main {
  flex: 1;
  min-width: 0;
  display: flex;
  flex-direction: column;
}
.map {
  display: block;
  width: 1225px;
  height: 501px;
  flex: none;
}
.map-num {
  font-family: 'Liberation Sans', sans-serif;
  fill: #ff9000;
}
.map-t {
  font-family: 'Liberation Sans', sans-serif;
  fill: #fff;
}

.status {
  flex: 1;
  display: flex;
  align-items: center;
  font-family: Roboto, sans-serif;
  font-size: 12px;
  white-space: nowrap;
  border-top: 1px solid #fff;
  border-bottom: 1px solid #fff;
  padding-left: 3px;
  box-sizing: border-box;
}
.stat-ic {
  width: 14px;
  height: 12px;
  flex: none;
}
.stat-sq {
  width: 11px;
  height: 9px;
  background: #000;
  border: 1px solid #777;
  margin-left: 6px;
  flex: none;
}
.stat-11 {
  width: 12px;
  font-weight: 400;
  margin-left: 7px;
  font-size: 11px;
  flex: none;
}
.stat-one {
  width: 11px;
  margin-left: 8px;
  flex: none;
}
.input {
  height: 19px;
  box-sizing: border-box;
  background: #fff;
  border: 1px solid #777;
  flex: none;
  line-height: 17px;
  padding-left: 2px;
}
.i-scale {
  width: 45px;
}
.lock {
  width: 15px;
  height: 18px;
  margin: 0 4px;
  flex: none;
}
.cell-line {
  width: 1px;
  height: 22px;
  background: #c8c8c8;
  flex: none;
}
.radio {
  width: 5px;
  height: 5px;
  border-radius: 50%;
  background: #000;
  margin-left: 4px;
  flex: none;
}
.lbl {
  flex: none;
}
.w-nr {
  width: 19px;
  margin-left: 5px;
  font-size: 12px;
}
.i-nr {
  width: 48px;
}
.w-kod {
  margin-left: 4px;
  width: 28px;
}
.i-kod {
  width: 44px;
  margin-right: 2px;
}
.coord {
  flex: none;
  font-size: 11.5px;
  letter-spacing: -0.3px;
}
.cx {
  width: 86px;
  padding-left: 1px;
  box-sizing: border-box;
}
.cy {
  width: 82px;
  padding-left: 3px;
  box-sizing: border-box;
}
.gap-h {
  width: 76px;
  flex: none;
}
.w-h {
  width: 12px;
  margin-left: 7px;
}
.i-h {
  width: 49px;
  margin-right: 1px;
}
.edit {
  padding-left: 2px;
}

.tabs {
  height: 30px;
  flex: none;
  background: #f0f0f0;
  display: flex;
  align-items: center;
  gap: 0;
  padding-left: 4px;
  border-bottom: 1px solid #fff;
  box-sizing: border-box;
}
.big-tile {
  width: 20px;
  height: 21px;
  color: #fff;
  font-weight: 700;
  font-size: 19px;
  line-height: 21px;
  text-align: center;
  font-family: 'DejaVu Sans', sans-serif;
}
.tabs .caret {
  margin: 0 7px 0 5px;
}
.green {
  background: #3a9a60;
}
.blue {
  background: #6b9cf5;
}
.gray {
  background: #909090;
}
.tab-line {
  width: 1px;
  height: 28px;
  background: #a8a8a8;
  margin-right: 5px;
  margin-left: -4px;
}
.map-tab {
  display: flex;
  align-items: center;
  gap: 5px;
  font-weight: 700;
  font-size: 12px;
  font-family: Roboto, sans-serif;
  white-space: nowrap;
  height: 26px;
  padding-right: 3px;
}
.map-tab.active {
  box-sizing: border-box;
  width: 125px;
  padding-left: 3px;
  border: 1px solid #b0b0b0;
  box-shadow: inset 1px 1px 0 #fff;
}
.round {
  width: 21px;
  height: 21px;
  border-radius: 50%;
  color: #fff;
  font-size: 15px;
  line-height: 21px;
  text-align: center;
  font-weight: 700;
  font-family: 'DejaVu Sans', sans-serif;
}
.blue2 {
  background: #0050e8;
}
.dark {
  background: #04663a;
}

.lower {
  flex: 1;
  display: flex;
  min-height: 0;
  border-top: 1px solid #d0d0d0;
}
.vtab {
  width: 31px;
  flex: none;
  box-sizing: border-box;
  background: #f0f0f0;
  border-right: 1px solid #b4b4b4;
  writing-mode: vertical-rl;
  font-family: Roboto, sans-serif;
  font-size: 12px;
  letter-spacing: -0.35px;
  padding: 5px 8px 0 0;
  line-height: 16px;
  white-space: nowrap;
}
.data {
  flex: 1;
  min-width: 0;
  padding-left: 1px;
}
.data-tools {
  height: 34px;
  background: #f0f0f0;
  padding-left: 5px;
  display: flex;
  align-items: center;
}
.tools-inner {
  display: flex;
  align-items: center;
  width: 638px;
  height: 31px;
  padding-left: 0;
  border-left: 1px solid #a8a8a8;
  border-right: 1px solid #a8a8a8;
  border-bottom: 1px solid #a8a8a8;
  box-sizing: border-box;
}
.tool {
  display: flex;
  align-items: center;
  flex: none;
}
.tool.has-caret {
  width: 37px;
}

.grid {
  width: 854px;
  font-family: Roboto, sans-serif;
  font-size: 11.5px;
  letter-spacing: -0.3px;
}
.g-row {
  display: grid;
  grid-template-columns: 15px 39px 101px 389px 100px 70px 70px 70px;
  height: 19px;
}
.g-head {
  background: #aac8ef;
  border-top: 1px solid #8fa8c8;
  box-sizing: content-box;
  height: 18px;
}
.h-first {
  display: flex;
  align-items: center;
  justify-content: center;
}
.h-cell {
  display: flex;
  align-items: center;
  justify-content: space-between;
  padding: 0 2px 0 2px;
  border-left: 1px solid #dce8f8;
  min-width: 0;
  overflow: hidden;
  white-space: nowrap;
}
.h-btn,
.s-btn {
  flex: none;
  width: 14px;
  height: 14px;
  box-sizing: border-box;
  background: #9bbcee;
  border: 1px solid #4a78c8;
  position: relative;
  display: block;
}
.h-btn::after,
.s-btn::after {
  content: '';
  position: absolute;
  left: 2px;
  top: 4px;
  border-left: 4px solid transparent;
  border-right: 4px solid transparent;
  border-top: 4px solid #000;
}
.ind {
  background: #aac8ef;
  border-bottom: 1px solid #7aa0d8;
  box-sizing: border-box;
  position: relative;
}
.ind-mark {
  position: absolute;
  left: 2px;
  top: 1px;
  font-size: 10px;
}
.cell {
  border-left: 1px solid #a0a0a0;
  border-bottom: 1px solid #a0a0a0;
  box-sizing: border-box;
  line-height: 18px;
  padding-left: 1px;
  white-space: nowrap;
  overflow: hidden;
  position: relative;
  min-width: 0;
}
.src {
  font-size: 11px;
  letter-spacing: -0.2px;
}
.cell:last-child {
  border-right: 1px solid #a0a0a0;
}
.center {
  display: flex;
  justify-content: center;
  align-items: center;
  padding: 0;
}
.num {
  text-align: right;
  padding-right: 2px;
}
.chk {
  width: 13px;
  height: 13px;
  box-sizing: border-box;
  border: 1.5px solid #000;
  background: #fff;
  margin-left: -3px;
}
.selected .cell {
  background: #f0f0f0;
  border-top: 1px solid #000;
  border-bottom: 2px solid #000;
  border-left-color: #a0a0a0;
  line-height: 16px;
}
.selected .cell:nth-child(2) {
  border-left: 2px solid #000;
}
.selected .cell:last-child {
  border-right: 2px solid #000;
}
.s-btn {
  position: absolute;
  right: 3px;
  top: 1px;
  width: 19px;
  height: 15px;
  border: 0;
  background: #a8c4f4;
}
.s-btn::after {
  left: 5px;
  top: 5px;
}
</style>
